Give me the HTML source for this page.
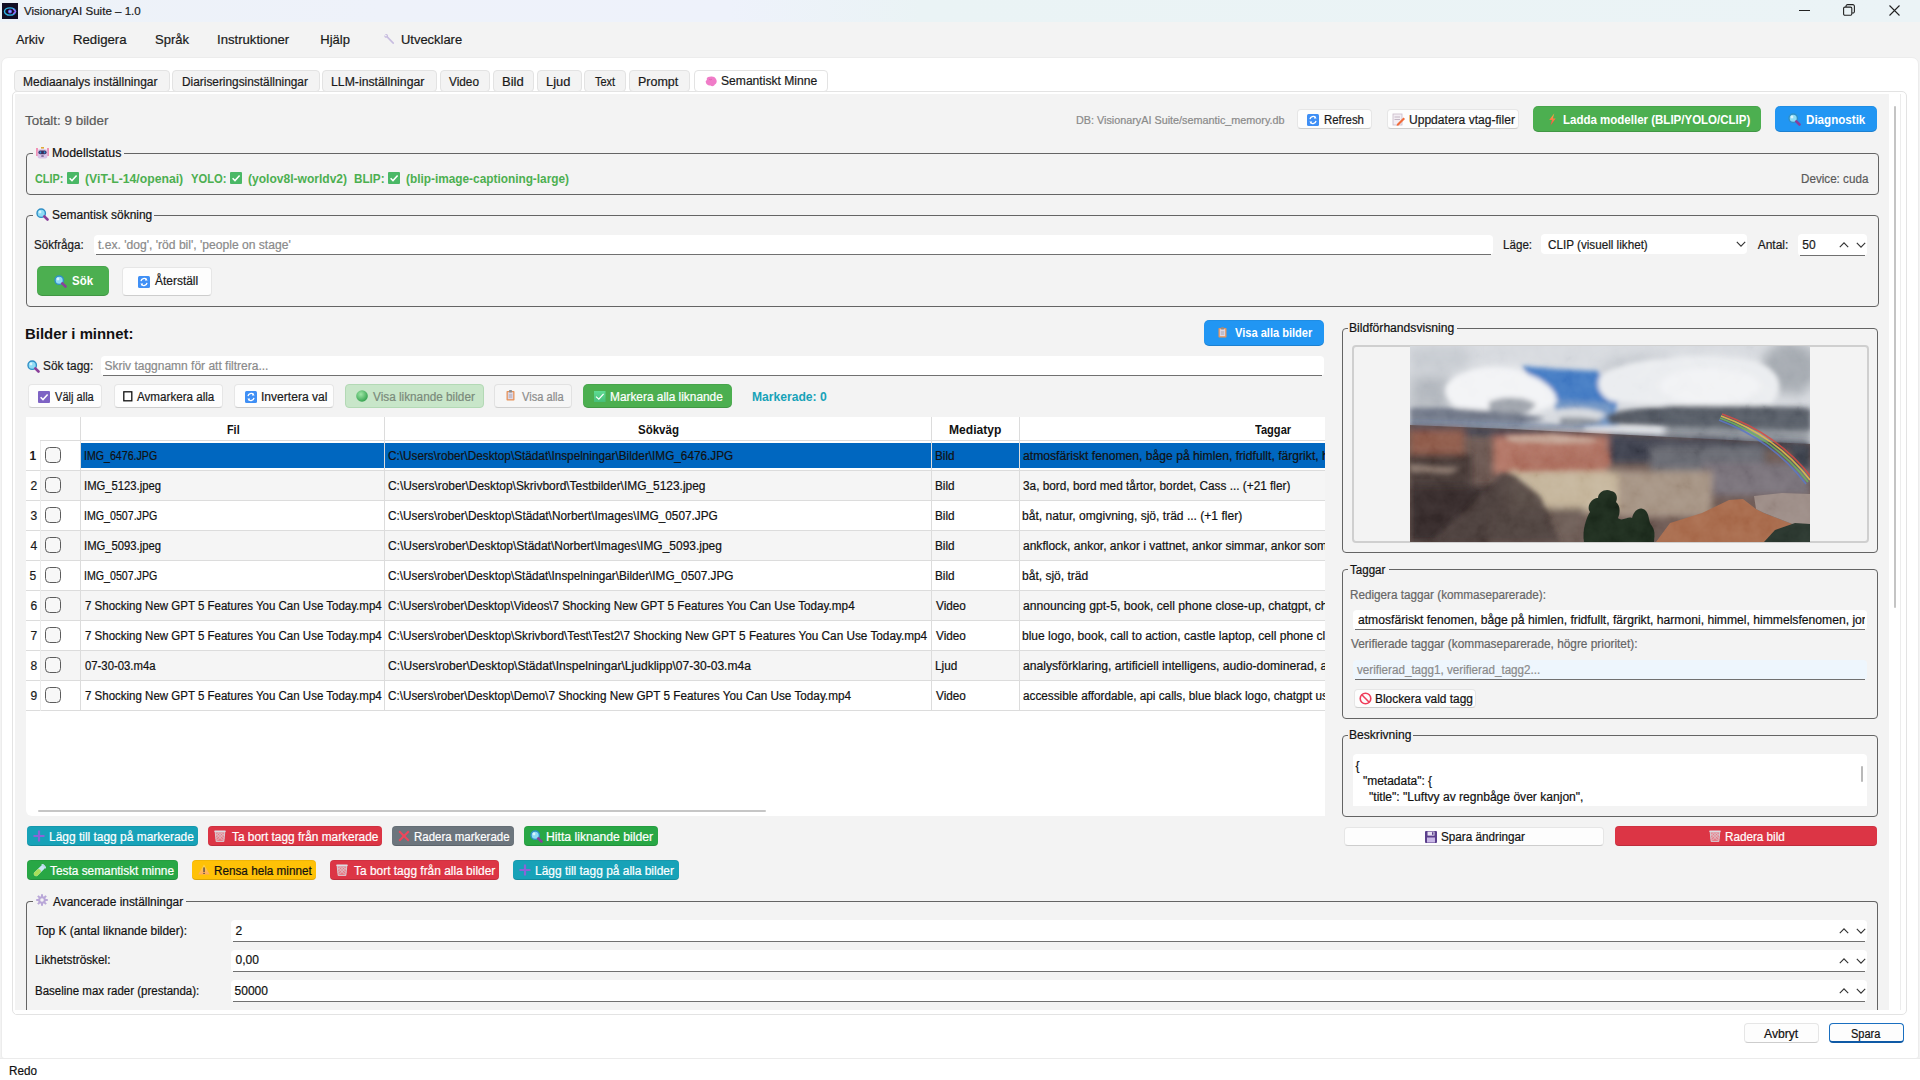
<!DOCTYPE html>
<html><head><meta charset="utf-8"><title>VisionaryAI Suite</title><style>*{margin:0;padding:0}html,body{width:1920px;height:1080px;overflow:hidden;background:#f3f3f3}
.b{position:absolute}
.t{position:absolute;white-space:nowrap;line-height:1;transform-origin:0 0;font-family:"Liberation Sans",sans-serif;-webkit-text-stroke-width:0.2px}
.t.bd{-webkit-text-stroke-width:0}
</style></head><body>
<div class="b" style="left:0px;top:0px;width:1920px;height:1080px;background:#f3f3f3"></div>
<div class="b" style="left:0px;top:0px;width:1920px;height:22px;background:linear-gradient(90deg,#edf2f8 0%,#eef2fa 20%,#eef2fb 38%,#eaf3f5 48%,#ebf3f6 100%)"></div>
<svg class="b" style="left:2px;top:3px" width="16" height="16" viewBox="0 0 16 16"><rect width="16" height="16" fill="#120d24"/><ellipse cx="8" cy="8.5" rx="5.5" ry="3.6" fill="none" stroke="#2fb3e6" stroke-width="1.4"/><circle cx="8" cy="8.5" r="2" fill="#7a4cf0"/><circle cx="8" cy="8.5" r="0.9" fill="#5de0ff"/><path d="M11 6 L13.6 8.4 L11 11" stroke="#a05cf5" stroke-width="1.2" fill="none"/></svg>
<div class="t" style="left:24.20px;top:6.26px;font-size:11.5px;color:#1b1b1b;transform:scaleX(1.0052);">VisionaryAI Suite – 1.0</div>
<div class="b" style="left:1799px;top:10px;width:11px;height:1px;background:#222"></div>
<svg class="b" style="left:1843px;top:4px" width="12" height="12" viewBox="0 0 12 12"><rect x="0.6" y="3.1" width="8.2" height="8.2" rx="1.2" fill="none" stroke="#222" stroke-width="1.1"/><path d="M3 3 V2.2 A1.6 1.6 0 0 1 4.6 0.6 H9.8 A1.6 1.6 0 0 1 11.4 2.2 V7.4 A1.6 1.6 0 0 1 9.8 9 H9" fill="none" stroke="#222" stroke-width="1.1"/></svg>
<svg class="b" style="left:1889px;top:5px" width="11" height="11" viewBox="0 0 11 11"><path d="M0.5 0.5 L10.5 10.5 M10.5 0.5 L0.5 10.5" stroke="#222" stroke-width="1.1"/></svg>
<div class="t" style="left:15.80px;top:32.99px;font-size:13px;color:#1a1a1a;transform:scaleX(0.9793);">Arkiv</div>
<div class="t" style="left:73.18px;top:32.99px;font-size:13px;color:#1a1a1a;transform:scaleX(1.0154);">Redigera</div>
<div class="t" style="left:155.25px;top:32.99px;font-size:13px;color:#1a1a1a;transform:scaleX(1.0015);">Språk</div>
<div class="t" style="left:216.99px;top:32.99px;font-size:13px;color:#1a1a1a;transform:scaleX(1.0099);">Instruktioner</div>
<div class="t" style="left:320.30px;top:32.99px;font-size:13px;color:#1a1a1a;transform:scaleX(1.0000);">Hjälp</div>
<div class="t" style="left:401.00px;top:32.99px;font-size:13px;color:#1a1a1a;transform:scaleX(0.9950);">Utvecklare</div>
<svg class="b" style="left:383px;top:33px" width="12" height="13" viewBox="0 0 12 13"><path d="M2 1.5 C3.5 0.5 5.5 1.5 5 3.5 L10.8 9.6 C11.6 10.4 10.6 11.6 9.7 10.8 L3.8 4.8 C2 5.2 0.8 3.6 1.4 2.2 L3 3.6 L4 2.6Z" fill="#c8bde0"/></svg>
<div class="b" style="left:1px;top:57px;width:1918px;height:1002px;background:#fff;border:1px solid #ececec;border-radius:7px 7px 3px 3px;box-sizing:border-box"></div>
<div class="b" style="left:12px;top:91px;width:1895px;height:924px;background:#fff;border:1px solid #e3e3e3;border-radius:5px;box-sizing:border-box"></div>
<div class="b" style="left:14px;top:70px;width:156px;height:22px;background:#f3f3f3;border:1px solid #e3e3e3;border-radius:4px;box-sizing:border-box"></div>
<div class="t" style="left:23.25px;top:75.84px;font-size:12px;color:#1a1a1a;transform:scaleX(0.9981);">Mediaanalys inställningar</div>
<div class="b" style="left:172px;top:70px;width:148px;height:22px;background:#f3f3f3;border:1px solid #e3e3e3;border-radius:4px;box-sizing:border-box"></div>
<div class="t" style="left:181.51px;top:75.84px;font-size:12px;color:#1a1a1a;transform:scaleX(0.9882);">Diariseringsinställningar</div>
<div class="b" style="left:322px;top:70px;width:115px;height:22px;background:#f3f3f3;border:1px solid #e3e3e3;border-radius:4px;box-sizing:border-box"></div>
<div class="t" style="left:330.98px;top:75.84px;font-size:12px;color:#1a1a1a;transform:scaleX(1.0220);">LLM-inställningar</div>
<div class="b" style="left:440px;top:70px;width:50px;height:22px;background:#f3f3f3;border:1px solid #e3e3e3;border-radius:4px;box-sizing:border-box"></div>
<div class="t" style="left:449.25px;top:75.84px;font-size:12px;color:#1a1a1a;transform:scaleX(0.9833);">Video</div>
<div class="b" style="left:493px;top:70px;width:41px;height:22px;background:#f3f3f3;border:1px solid #e3e3e3;border-radius:4px;box-sizing:border-box"></div>
<div class="t" style="left:501.92px;top:75.84px;font-size:12px;color:#1a1a1a;transform:scaleX(1.0833);">Bild</div>
<div class="b" style="left:537px;top:70px;width:45px;height:22px;background:#f3f3f3;border:1px solid #e3e3e3;border-radius:4px;box-sizing:border-box"></div>
<div class="t" style="left:545.93px;top:75.84px;font-size:12px;color:#1a1a1a;transform:scaleX(1.0714);">Ljud</div>
<div class="b" style="left:584px;top:70px;width:42px;height:22px;background:#f3f3f3;border:1px solid #e3e3e3;border-radius:4px;box-sizing:border-box"></div>
<div class="t" style="left:594.50px;top:75.84px;font-size:12px;color:#1a1a1a;transform:scaleX(0.9091);">Text</div>
<div class="b" style="left:629px;top:70px;width:61px;height:22px;background:#f3f3f3;border:1px solid #e3e3e3;border-radius:4px;box-sizing:border-box"></div>
<div class="t" style="left:638.21px;top:75.84px;font-size:12px;color:#1a1a1a;transform:scaleX(1.0395);">Prompt</div>
<div class="b" style="left:694px;top:70px;width:134px;height:22px;background:#fff;border:1px solid #e3e3e3;border-radius:4px;box-sizing:border-box"></div>
<svg class="b" style="left:705px;top:75.5px" width="12" height="11" viewBox="0 0 12 11"><path d="M2 4 C1 2 3 0.2 5 0.8 C7 0 10 0.6 11 3 C12.4 5 11.6 8 9.8 8.6 C9 10.4 6.6 10.6 5.6 9.4 C3.6 10 0.8 8.6 1 6.4 C0.2 5.6 1 4.4 2 4Z" fill="#f07cc8"/><path d="M4 3 C5 4 6 4 7 3" stroke="#d9559f" stroke-width="0.6" fill="none"/></svg>
<div class="t" style="left:721.29px;top:74.84px;font-size:12px;color:#1a1a1a;transform:scaleX(1.0085);">Semantiskt Minne</div>
<div class="b" style="left:15px;top:94px;width:1874px;height:916px;background:#f3f3f3"></div>
<div class="b" style="left:1900px;top:94px;width:1px;height:916px;background:#ececec"></div>
<div class="b" style="left:1894px;top:106px;width:2px;height:502px;background:#c4c4c4;border-radius:1px"></div>
<div class="t" style="left:25.25px;top:113.71px;font-size:13.33px;color:#5a5a5a;transform:scaleX(1.0060);">Totalt: 9 bilder</div>
<div class="t" style="left:1075.99px;top:114.94px;font-size:10.7px;color:#8a8a8a;transform:scaleX(1.0110);">DB: VisionaryAI Suite/semantic_memory.db</div>
<div class="b" style="left:1297px;top:109px;width:75px;height:20px;background:#fdfdfd;border:1px solid #e6e6e6;border-bottom-color:#cdcdcd;border-radius:4px;box-sizing:border-box"></div>
<svg class="b" style="left:1307px;top:113.5px" width="12" height="12" viewBox="0 0 12 12"><rect x="0" y="0" width="12" height="12" rx="1.5" fill="#3f8ff5"/><path d="M3 5.2 A3.2 3.2 0 0 1 8.6 3.6 M9 6.8 A3.2 3.2 0 0 1 3.4 8.4" fill="none" stroke="#fff" stroke-width="1.3"/><path d="M8 2 L9.6 4.4 L6.8 4.6Z M4 10 L2.4 7.6 L5.2 7.4Z" fill="#fff"/></svg>
<div class="t" style="left:1323.55px;top:113.84px;font-size:12px;color:#1a1a1a;transform:scaleX(0.9500);">Refresh</div>
<div class="b" style="left:1387px;top:109px;width:132px;height:20px;background:#fdfdfd;border:1px solid #e6e6e6;border-bottom-color:#cdcdcd;border-radius:4px;box-sizing:border-box"></div>
<svg class="b" style="left:1392px;top:113px" width="13" height="13" viewBox="0 0 13 13"><rect x="1" y="1" width="9" height="11" fill="#f3eef4" stroke="#c9b9c9" stroke-width="0.8"/><line x1="2.5" y1="4" x2="8" y2="4" stroke="#b7a7b7" stroke-width="0.8"/><line x1="2.5" y1="6.5" x2="8" y2="6.5" stroke="#b7a7b7" stroke-width="0.8"/><path d="M5 11 L11.5 4.5 L13 6 L6.5 12.5 L4.6 12.8Z" fill="#f26b3a"/></svg>
<div class="t" style="left:1408.50px;top:113.84px;font-size:12px;color:#1a1a1a;transform:scaleX(1.0048);">Uppdatera vtag-filer</div>
<div class="b" style="left:1533px;top:106px;width:228px;height:26px;background:#4caf50;border-radius:5px;box-shadow:inset 0 -1px rgba(0,0,0,0.14),inset 0 1px rgba(0,0,0,0.06)"></div>
<svg class="b" style="left:1547.5px;top:113px" width="9" height="13" viewBox="0 0 9 13"><defs><linearGradient id="gbolt" x1="0" y1="0" x2="0" y2="1"><stop offset="0" stop-color="#ffb040"/><stop offset="1" stop-color="#ff4048"/></linearGradient></defs><path d="M6.2 0.6 L1.2 7 L4 7 L2.6 12.4 L7.6 5.4 L4.9 5.4 Z" fill="url(#gbolt)"/></svg>
<div class="t bd" style="left:1563.04px;top:113.84px;font-size:12px;font-weight:700;color:#fff;transform:scaleX(0.9588);">Ladda modeller (BLIP/YOLO/CLIP)</div>
<div class="b" style="left:1775px;top:106px;width:102px;height:26px;background:#2196f3;border-radius:5px;box-shadow:inset 0 -1px rgba(0,0,0,0.14),inset 0 1px rgba(0,0,0,0.06)"></div>
<svg class="b" style="left:1787.5px;top:112.5px" width="13" height="13" viewBox="0 0 13 13"><circle cx="5.2" cy="5.2" r="4.2" fill="#8fdcf5" stroke="#2f8fc6" stroke-width="1.4"/><circle cx="4" cy="4" r="1.4" fill="#d8f4fd"/><line x1="8.3" y1="8.3" x2="11.5" y2="11.5" stroke="#8a3f9a" stroke-width="2.6" stroke-linecap="round"/></svg>
<div class="t bd" style="left:1805.53px;top:113.84px;font-size:12px;font-weight:700;color:#fff;transform:scaleX(0.9672);">Diagnostik</div>
<div class="b" style="left:26px;top:153px;width:1853px;height:42px;border:1px solid #646464;border-radius:4px;box-sizing:border-box"></div>
<div class="b" style="left:33px;top:151px;width:91px;height:5px;background:#f3f3f3"></div>
<svg class="b" style="left:36px;top:147px" width="13" height="12" viewBox="0 0 13 12"><rect x="5" y="0" width="3" height="1.6" fill="#e0a93a"/><rect x="0.3" y="1" width="1.4" height="8" fill="#f0679a"/><rect x="11.3" y="1" width="1.4" height="8" fill="#f0679a"/><rect x="1.6" y="2.2" width="9.8" height="9.4" rx="2" fill="#d9c4e8"/><rect x="2.4" y="3.6" width="8.2" height="3.6" rx="1.8" fill="#3b2a5a"/><rect x="3.6" y="4.4" width="1.6" height="2" fill="#2e8fd6"/><rect x="7.8" y="4.4" width="1.6" height="2" fill="#2e8fd6"/><rect x="5.2" y="8.6" width="2.6" height="1" rx="0.5" fill="#3b2a5a"/></svg>
<div class="t" style="left:51.97px;top:146.84px;font-size:12px;color:#111;transform:scaleX(1.0303);">Modellstatus</div>
<div class="t bd" style="left:35.00px;top:172.84px;font-size:12px;font-weight:700;color:#4caf50;transform:scaleX(0.9083);">CLIP:</div>
<svg class="b" style="left:67px;top:172px" width="12" height="12" viewBox="0 0 12 12"><rect x="0" y="0" width="12" height="12" rx="1" fill="#4ab866"/><path d="M2.6 6.2 L5 8.6 L9.6 3.6" fill="none" stroke="#fff" stroke-width="1.5"/></svg>
<div class="t bd" style="left:85.00px;top:172.84px;font-size:12px;font-weight:700;color:#4caf50;transform:scaleX(1.0177);">(ViT-L-14/openai)</div>
<div class="t bd" style="left:190.70px;top:172.84px;font-size:12px;font-weight:700;color:#4caf50;transform:scaleX(0.9351);">YOLO:</div>
<svg class="b" style="left:230px;top:172px" width="12" height="12" viewBox="0 0 12 12"><rect x="0" y="0" width="12" height="12" rx="1" fill="#4ab866"/><path d="M2.6 6.2 L5 8.6 L9.6 3.6" fill="none" stroke="#fff" stroke-width="1.5"/></svg>
<div class="t bd" style="left:248.30px;top:172.84px;font-size:12px;font-weight:700;color:#4caf50;transform:scaleX(1.0041);">(yolov8l-worldv2)</div>
<div class="t bd" style="left:354.02px;top:172.84px;font-size:12px;font-weight:700;color:#4caf50;transform:scaleX(0.9759);">BLIP:</div>
<svg class="b" style="left:388px;top:172px" width="12" height="12" viewBox="0 0 12 12"><rect x="0" y="0" width="12" height="12" rx="1" fill="#4ab866"/><path d="M2.6 6.2 L5 8.6 L9.6 3.6" fill="none" stroke="#fff" stroke-width="1.5"/></svg>
<div class="t bd" style="left:406.00px;top:172.84px;font-size:12px;font-weight:700;color:#4caf50;transform:scaleX(0.9861);">(blip-image-captioning-large)</div>
<div class="t" style="left:1801.03px;top:172.84px;font-size:12px;color:#5a5a5a;transform:scaleX(0.9710);">Device: cuda</div>
<div class="b" style="left:26px;top:215px;width:1853px;height:92px;border:1px solid #646464;border-radius:4px;box-sizing:border-box"></div>
<div class="b" style="left:33px;top:213px;width:121px;height:5px;background:#f3f3f3"></div>
<svg class="b" style="left:36px;top:208px" width="13" height="13" viewBox="0 0 13 13"><circle cx="5.2" cy="5.2" r="4.2" fill="#8fdcf5" stroke="#2f8fc6" stroke-width="1.4"/><circle cx="4" cy="4" r="1.4" fill="#d8f4fd"/><line x1="8.3" y1="8.3" x2="11.5" y2="11.5" stroke="#8a3f9a" stroke-width="2.6" stroke-linecap="round"/></svg>
<div class="t" style="left:52.01px;top:208.84px;font-size:12px;color:#111;transform:scaleX(0.9949);">Semantisk sökning</div>
<div class="t" style="left:34.03px;top:238.84px;font-size:12px;color:#1a1a1a;transform:scaleX(0.9660);">Sökfråga:</div>
<div class="b" style="left:94px;top:235px;width:1399px;height:20px;background:#fff;border-radius:4px"></div>
<div class="b" style="left:96px;top:254px;width:1395px;height:1px;background:#707070"></div>
<div class="t" style="left:97.80px;top:238.84px;font-size:12px;color:#8a8a8a;transform:scaleX(1.0079);">t.ex. 'dog', 'röd bil', 'people on stage'</div>
<div class="t" style="left:1502.53px;top:238.84px;font-size:12px;color:#1a1a1a;transform:scaleX(0.9679);">Läge:</div>
<div class="b" style="left:1541px;top:234px;width:206px;height:20px;background:#fff;border-radius:4px"></div>
<div class="t" style="left:1548.40px;top:238.84px;font-size:12px;color:#1a1a1a;transform:scaleX(0.9735);">CLIP (visuell likhet)</div>
<svg class="b" style="left:1735.5px;top:241px" width="10" height="6" viewBox="0 0 10 6"><path d="M0.8 0.8 L5.0 5.2 L9.2 0.8" fill="none" stroke="#333" stroke-width="1.1"/></svg>
<div class="t" style="left:1757.70px;top:238.84px;font-size:12px;color:#1a1a1a;transform:scaleX(1.0000);">Antal:</div>
<div class="b" style="left:1798px;top:234px;width:69px;height:22px;background:#fff;border-radius:4px"></div>
<div class="b" style="left:1800px;top:255px;width:65px;height:1px;background:#707070"></div>
<div class="t" style="left:1802.30px;top:238.84px;font-size:12px;color:#1a1a1a;">50</div>
<svg class="b" style="left:1839.3px;top:241.5px" width="10" height="6" viewBox="0 0 10 6"><path d="M0.8 5.2 L5.0 0.8 L9.2 5.2" fill="none" stroke="#333" stroke-width="1.1"/></svg>
<svg class="b" style="left:1855.5px;top:242px" width="10" height="6" viewBox="0 0 10 6"><path d="M0.8 0.8 L5.0 5.2 L9.2 0.8" fill="none" stroke="#333" stroke-width="1.1"/></svg>
<div class="b" style="left:37px;top:266px;width:72px;height:30px;background:#4caf50;border-radius:5px;box-shadow:inset 0 -1px rgba(0,0,0,0.14),inset 0 1px rgba(0,0,0,0.06)"></div>
<svg class="b" style="left:54px;top:275px" width="13" height="13" viewBox="0 0 13 13"><circle cx="5.2" cy="5.2" r="4.2" fill="#8fdcf5" stroke="#2f8fc6" stroke-width="1.4"/><circle cx="4" cy="4" r="1.4" fill="#d8f4fd"/><line x1="8.3" y1="8.3" x2="11.5" y2="11.5" stroke="#8a3f9a" stroke-width="2.6" stroke-linecap="round"/></svg>
<div class="t bd" style="left:72.00px;top:275.34px;font-size:12px;font-weight:700;color:#fff;transform:scaleX(0.9545);">Sök</div>
<div class="b" style="left:122px;top:267px;width:90px;height:29px;background:#fdfdfd;border:1px solid #e6e6e6;border-bottom-color:#cdcdcd;border-radius:4px;box-sizing:border-box"></div>
<svg class="b" style="left:138px;top:276px" width="12" height="12" viewBox="0 0 12 12"><rect x="0" y="0" width="12" height="12" rx="1.5" fill="#3f8ff5"/><path d="M3 5.2 A3.2 3.2 0 0 1 8.6 3.6 M9 6.8 A3.2 3.2 0 0 1 3.4 8.4" fill="none" stroke="#fff" stroke-width="1.3"/><path d="M8 2 L9.6 4.4 L6.8 4.6Z M4 10 L2.4 7.6 L5.2 7.4Z" fill="#fff"/></svg>
<div class="t" style="left:155.00px;top:275.34px;font-size:12px;color:#1a1a1a;transform:scaleX(0.9953);">Återställ</div>
<div class="t bd" style="left:24.76px;top:326.30px;font-size:15px;font-weight:700;color:#111;transform:scaleX(0.9930);">Bilder i minnet:</div>
<div class="b" style="left:1204px;top:320px;width:120px;height:26px;background:#2196f3;border-radius:5px;box-shadow:inset 0 -1px rgba(0,0,0,0.14),inset 0 1px rgba(0,0,0,0.06)"></div>
<svg class="b" style="left:1218px;top:327px" width="9" height="11" viewBox="0 0 9 11"><rect x="0.5" y="1" width="8" height="9.5" rx="0.8" fill="#e8935a"/><rect x="1.8" y="2.2" width="5.4" height="7" fill="#ddd8e6"/><rect x="3" y="0" width="3" height="2.4" rx="0.6" fill="#8d8d8d"/><line x1="2.8" y1="5" x2="6.2" y2="5" stroke="#9b97a6" stroke-width="0.8"/><line x1="2.8" y1="7" x2="6.2" y2="7" stroke="#9b97a6" stroke-width="0.8"/></svg>
<div class="t bd" style="left:1235.40px;top:327.34px;font-size:12px;font-weight:700;color:#fff;transform:scaleX(0.9226);">Visa alla bilder</div>
<svg class="b" style="left:27px;top:360px" width="13" height="13" viewBox="0 0 13 13"><circle cx="5.2" cy="5.2" r="4.2" fill="#8fdcf5" stroke="#2f8fc6" stroke-width="1.4"/><circle cx="4" cy="4" r="1.4" fill="#d8f4fd"/><line x1="8.3" y1="8.3" x2="11.5" y2="11.5" stroke="#8a3f9a" stroke-width="2.6" stroke-linecap="round"/></svg>
<div class="t" style="left:43.01px;top:359.84px;font-size:12px;color:#1a1a1a;transform:scaleX(0.9898);">Sök tagg:</div>
<div class="b" style="left:101px;top:356px;width:1223px;height:20px;background:#fff;border-radius:4px"></div>
<div class="b" style="left:103px;top:375px;width:1219px;height:1px;background:#707070"></div>
<div class="t" style="left:104.40px;top:359.84px;font-size:12px;color:#8a8a8a;">Skriv taggnamn för att filtrera...</div>
<div class="b" style="left:28px;top:384px;width:74px;height:24px;background:#fdfdfd;border:1px solid #e6e6e6;border-bottom-color:#cdcdcd;border-radius:4px;box-sizing:border-box"></div>
<svg class="b" style="left:38px;top:390.5px" width="12" height="12" viewBox="0 0 12 12"><rect x="0" y="0" width="12" height="12" rx="1" fill="#7e63c4"/><path d="M2.6 6.2 L5 8.6 L9.6 3.6" fill="none" stroke="#fff" stroke-width="1.5"/></svg>
<div class="t" style="left:55.00px;top:390.84px;font-size:12px;color:#1a1a1a;transform:scaleX(0.9226);">Välj alla</div>
<div class="b" style="left:114px;top:384px;width:109px;height:24px;background:#fdfdfd;border:1px solid #e6e6e6;border-bottom-color:#cdcdcd;border-radius:4px;box-sizing:border-box"></div>
<svg class="b" style="left:123px;top:391px" width="10" height="11" viewBox="0 0 10 11"><rect x="0.8" y="0.8" width="8" height="9" fill="none" stroke="#111" stroke-width="1.3"/></svg>
<div class="t" style="left:137.25px;top:390.84px;font-size:12px;color:#1a1a1a;transform:scaleX(0.9688);">Avmarkera alla</div>
<div class="b" style="left:234px;top:384px;width:100px;height:24px;background:#fdfdfd;border:1px solid #e6e6e6;border-bottom-color:#cdcdcd;border-radius:4px;box-sizing:border-box"></div>
<svg class="b" style="left:245px;top:390.5px" width="12" height="12" viewBox="0 0 12 12"><rect x="0" y="0" width="12" height="12" rx="1.5" fill="#3f8ff5"/><path d="M3 5.2 A3.2 3.2 0 0 1 8.6 3.6 M9 6.8 A3.2 3.2 0 0 1 3.4 8.4" fill="none" stroke="#fff" stroke-width="1.3"/><path d="M8 2 L9.6 4.4 L6.8 4.6Z M4 10 L2.4 7.6 L5.2 7.4Z" fill="#fff"/></svg>
<div class="t" style="left:260.59px;top:390.84px;font-size:12px;color:#1a1a1a;transform:scaleX(1.0062);">Invertera val</div>
<div class="b" style="left:345px;top:384px;width:139px;height:24px;background:#c8e6c9;border:1px solid #b3d9b5;border-radius:4px;box-sizing:border-box"></div>
<svg class="b" style="left:356.3px;top:390.3px" width="12" height="12" viewBox="0 0 12 12"><defs><radialGradient id="gb" cx="0.4" cy="0.35" r="0.7"><stop offset="0" stop-color="#9ee6a6"/><stop offset="1" stop-color="#2f9f4a"/></radialGradient></defs><circle cx="6" cy="6" r="5.8" fill="url(#gb)"/></svg>
<div class="t" style="left:373.00px;top:390.84px;font-size:12px;color:#7a8a7a;transform:scaleX(0.9808);">Visa liknande bilder</div>
<div class="b" style="left:494px;top:384px;width:78px;height:24px;background:#f6f6f6;border:1px solid #e2e2e2;border-bottom-color:#cfcfcf;border-radius:4px;box-sizing:border-box"></div>
<svg class="b" style="left:505.6px;top:390px" width="9" height="11" viewBox="0 0 9 11"><rect x="0.5" y="1" width="8" height="9.5" rx="0.8" fill="#e8935a"/><rect x="1.8" y="2.2" width="5.4" height="7" fill="#ddd8e6"/><rect x="3" y="0" width="3" height="2.4" rx="0.6" fill="#8d8d8d"/><line x1="2.8" y1="5" x2="6.2" y2="5" stroke="#9b97a6" stroke-width="0.8"/><line x1="2.8" y1="7" x2="6.2" y2="7" stroke="#9b97a6" stroke-width="0.8"/></svg>
<div class="t" style="left:521.90px;top:390.84px;font-size:12px;color:#8c8c8c;transform:scaleX(0.9244);">Visa alla</div>
<div class="b" style="left:583px;top:384px;width:149px;height:24px;background:#4caf50;border-radius:5px;box-shadow:inset 0 -1px rgba(0,0,0,0.14),inset 0 1px rgba(0,0,0,0.06)"></div>
<svg class="b" style="left:594.2px;top:391px" width="12" height="12" viewBox="0 0 12 12"><defs><linearGradient id="gcl" x1="0" y1="0" x2="0" y2="1"><stop offset="0" stop-color="#5fdc94"/><stop offset="1" stop-color="#47bf7a"/></linearGradient></defs><rect x="0" y="0" width="11.5" height="11" fill="url(#gcl)"/><path d="M2 5.6 L4.8 8.2 L9.6 2.8" fill="none" stroke="#fff" stroke-width="1.2"/></svg>
<div class="t" style="left:610.26px;top:390.84px;font-size:12px;color:#fff;transform:scaleX(0.9889);">Markera alla liknande</div>
<div class="t bd" style="left:751.99px;top:390.84px;font-size:12px;font-weight:700;color:#17a2b8;transform:scaleX(1.0096);">Markerade: 0</div>
<div class="b" style="left:26px;top:417px;width:1299px;height:399px;background:#fff;border-radius:0 0 0 6px"></div>
<div class="b" style="left:81px;top:443px;width:303px;height:25px;background:#0067c0"></div>
<div class="b" style="left:385px;top:443px;width:546px;height:25px;background:#0067c0"></div>
<div class="b" style="left:932px;top:443px;width:87px;height:25px;background:#0067c0"></div>
<div class="b" style="left:1020px;top:443px;width:305px;height:25px;background:#0067c0"></div>
<div class="t bd" style="left:29.50px;top:449.84px;font-size:12px;font-weight:700;color:#1a1a1a;">1</div>
<div class="b" style="left:45px;top:447px;width:16px;height:16px;border:1.2px solid #5c5c5c;border-radius:4.5px;box-sizing:border-box;background:#f7f7f7"></div>
<div class="t" style="left:83.72px;top:449.84px;font-size:12px;color:#111;transform:scaleX(0.8846);">IMG_6476.JPG</div>
<div class="t" style="left:388.20px;top:449.84px;font-size:12px;color:#111;transform:scaleX(0.9801);">C:\Users\rober\Desktop\Städat\Inspelningar\Bilder\IMG_6476.JPG</div>
<div class="t" style="left:934.50px;top:449.84px;font-size:12px;color:#111;transform:scaleX(0.98);">Bild</div>
<div class="b" style="left:1020px;top:441px;width:305px;height:29px;overflow:hidden">
<div class="t" style="left:3.30px;top:8.84px;font-size:12px;color:#111;transform:scaleX(1.0120);">atmosfäriskt fenomen, båge på himlen, fridfullt, färgrikt, harmoni, himmel</div>
</div>
<div class="b" style="left:40px;top:471px;width:1285px;height:29px;background:#f5f5f5"></div>
<div class="t" style="left:30.50px;top:479.84px;font-size:12px;color:#1a1a1a;">2</div>
<div class="b" style="left:45px;top:477px;width:16px;height:16px;border:1.2px solid #5c5c5c;border-radius:4.5px;box-sizing:border-box;background:#f7f7f7"></div>
<div class="t" style="left:83.66px;top:479.84px;font-size:12px;color:#111;transform:scaleX(0.9383);">IMG_5123.jpeg</div>
<div class="t" style="left:388.20px;top:479.84px;font-size:12px;color:#111;transform:scaleX(0.9937);">C:\Users\rober\Desktop\Skrivbord\Testbilder\IMG_5123.jpeg</div>
<div class="t" style="left:934.50px;top:479.84px;font-size:12px;color:#111;transform:scaleX(0.98);">Bild</div>
<div class="b" style="left:1020px;top:471px;width:305px;height:29px;overflow:hidden">
<div class="t" style="left:3.30px;top:8.84px;font-size:12px;color:#111;transform:scaleX(0.9838);">3a, bord, bord med tårtor, bordet, Cass ... (+21 fler)</div>
</div>
<div class="t" style="left:30.50px;top:509.84px;font-size:12px;color:#1a1a1a;">3</div>
<div class="b" style="left:45px;top:507px;width:16px;height:16px;border:1.2px solid #5c5c5c;border-radius:4.5px;box-sizing:border-box;background:#f7f7f7"></div>
<div class="t" style="left:83.71px;top:509.84px;font-size:12px;color:#111;transform:scaleX(0.8864);">IMG_0507.JPG</div>
<div class="t" style="left:388.20px;top:509.84px;font-size:12px;color:#111;transform:scaleX(0.9830);">C:\Users\rober\Desktop\Städat\Norbert\Images\IMG_0507.JPG</div>
<div class="t" style="left:934.50px;top:509.84px;font-size:12px;color:#111;transform:scaleX(0.98);">Bild</div>
<div class="b" style="left:1020px;top:501px;width:305px;height:29px;overflow:hidden">
<div class="t" style="left:2.29px;top:8.84px;font-size:12px;color:#111;transform:scaleX(1.0050);">båt, natur, omgivning, sjö, träd ... (+1 fler)</div>
</div>
<div class="b" style="left:40px;top:531px;width:1285px;height:29px;background:#f5f5f5"></div>
<div class="t" style="left:30.50px;top:539.84px;font-size:12px;color:#1a1a1a;">4</div>
<div class="b" style="left:45px;top:537px;width:16px;height:16px;border:1.2px solid #5c5c5c;border-radius:4.5px;box-sizing:border-box;background:#f7f7f7"></div>
<div class="t" style="left:83.66px;top:539.84px;font-size:12px;color:#111;transform:scaleX(0.9383);">IMG_5093.jpeg</div>
<div class="t" style="left:388.20px;top:539.84px;font-size:12px;color:#111;transform:scaleX(0.9972);">C:\Users\rober\Desktop\Städat\Norbert\Images\IMG_5093.jpeg</div>
<div class="t" style="left:934.50px;top:539.84px;font-size:12px;color:#111;transform:scaleX(0.98);">Bild</div>
<div class="b" style="left:1020px;top:531px;width:305px;height:29px;overflow:hidden">
<div class="t" style="left:3.30px;top:8.84px;font-size:12px;color:#111;transform:scaleX(1.0016);">ankflock, ankor, ankor i vattnet, ankor simmar, ankor som simmar</div>
</div>
<div class="t" style="left:29.50px;top:569.84px;font-size:12px;color:#1a1a1a;">5</div>
<div class="b" style="left:45px;top:567px;width:16px;height:16px;border:1.2px solid #5c5c5c;border-radius:4.5px;box-sizing:border-box;background:#f7f7f7"></div>
<div class="t" style="left:83.71px;top:569.84px;font-size:12px;color:#111;transform:scaleX(0.8864);">IMG_0507.JPG</div>
<div class="t" style="left:388.20px;top:569.84px;font-size:12px;color:#111;transform:scaleX(0.9810);">C:\Users\rober\Desktop\Städat\Inspelningar\Bilder\IMG_0507.JPG</div>
<div class="t" style="left:934.50px;top:569.84px;font-size:12px;color:#111;transform:scaleX(0.98);">Bild</div>
<div class="b" style="left:1020px;top:561px;width:305px;height:29px;overflow:hidden">
<div class="t" style="left:2.30px;top:8.84px;font-size:12px;color:#111;transform:scaleX(1.0031);">båt, sjö, träd</div>
</div>
<div class="b" style="left:40px;top:591px;width:1285px;height:29px;background:#f5f5f5"></div>
<div class="t" style="left:30.50px;top:599.84px;font-size:12px;color:#1a1a1a;">6</div>
<div class="b" style="left:45px;top:597px;width:16px;height:16px;border:1.2px solid #5c5c5c;border-radius:4.5px;box-sizing:border-box;background:#f7f7f7"></div>
<div class="t" style="left:84.60px;top:599.84px;font-size:12px;color:#111;transform:scaleX(0.9586);">7 Shocking New GPT 5 Features You Can Use Today.mp4</div>
<div class="t" style="left:388.20px;top:599.84px;font-size:12px;color:#111;transform:scaleX(0.9762);">C:\Users\rober\Desktop\Videos\7 Shocking New GPT 5 Features You Can Use Today.mp4</div>
<div class="t" style="left:935.50px;top:599.84px;font-size:12px;color:#111;transform:scaleX(0.98);">Video</div>
<div class="b" style="left:1020px;top:591px;width:305px;height:29px;overflow:hidden">
<div class="t" style="left:3.30px;top:8.84px;font-size:12px;color:#111;transform:scaleX(1.0123);">announcing gpt-5, book, cell phone close-up, chatgpt, chatgpt logo</div>
</div>
<div class="t" style="left:30.50px;top:629.84px;font-size:12px;color:#1a1a1a;">7</div>
<div class="b" style="left:45px;top:627px;width:16px;height:16px;border:1.2px solid #5c5c5c;border-radius:4.5px;box-sizing:border-box;background:#f7f7f7"></div>
<div class="t" style="left:84.60px;top:629.84px;font-size:12px;color:#111;transform:scaleX(0.9586);">7 Shocking New GPT 5 Features You Can Use Today.mp4</div>
<div class="t" style="left:388.20px;top:629.84px;font-size:12px;color:#111;transform:scaleX(0.9810);">C:\Users\rober\Desktop\Skrivbord\Test\Test2\7 Shocking New GPT 5 Features You Can Use Today.mp4</div>
<div class="t" style="left:935.50px;top:629.84px;font-size:12px;color:#111;transform:scaleX(0.98);">Video</div>
<div class="b" style="left:1020px;top:621px;width:305px;height:29px;overflow:hidden">
<div class="t" style="left:2.30px;top:8.84px;font-size:12px;color:#111;transform:scaleX(1.0035);">blue logo, book, call to action, castle laptop, cell phone close-up</div>
</div>
<div class="b" style="left:40px;top:651px;width:1285px;height:29px;background:#f5f5f5"></div>
<div class="t" style="left:30.50px;top:659.84px;font-size:12px;color:#1a1a1a;">8</div>
<div class="b" style="left:45px;top:657px;width:16px;height:16px;border:1.2px solid #5c5c5c;border-radius:4.5px;box-sizing:border-box;background:#f7f7f7"></div>
<div class="t" style="left:84.60px;top:659.84px;font-size:12px;color:#111;transform:scaleX(0.9440);">07-30-03.m4a</div>
<div class="t" style="left:388.20px;top:659.84px;font-size:12px;color:#111;transform:scaleX(1.0058);">C:\Users\rober\Desktop\Städat\Inspelningar\Ljudklipp\07-30-03.m4a</div>
<div class="t" style="left:934.50px;top:659.84px;font-size:12px;color:#111;transform:scaleX(0.98);">Ljud</div>
<div class="b" style="left:1020px;top:651px;width:305px;height:29px;overflow:hidden">
<div class="t" style="left:3.30px;top:8.84px;font-size:12px;color:#111;transform:scaleX(1.0117);">analysförklaring, artificiell intelligens, audio-dominerad, analys</div>
</div>
<div class="t" style="left:30.50px;top:689.84px;font-size:12px;color:#1a1a1a;">9</div>
<div class="b" style="left:45px;top:687px;width:16px;height:16px;border:1.2px solid #5c5c5c;border-radius:4.5px;box-sizing:border-box;background:#f7f7f7"></div>
<div class="t" style="left:84.60px;top:689.84px;font-size:12px;color:#111;transform:scaleX(0.9586);">7 Shocking New GPT 5 Features You Can Use Today.mp4</div>
<div class="t" style="left:388.20px;top:689.84px;font-size:12px;color:#111;transform:scaleX(0.9776);">C:\Users\rober\Desktop\Demo\7 Shocking New GPT 5 Features You Can Use Today.mp4</div>
<div class="t" style="left:935.50px;top:689.84px;font-size:12px;color:#111;transform:scaleX(0.98);">Video</div>
<div class="b" style="left:1020px;top:681px;width:305px;height:29px;overflow:hidden">
<div class="t" style="left:3.30px;top:8.84px;font-size:12px;color:#111;transform:scaleX(0.9797);">accessible affordable, api calls, blue black logo, chatgpt using</div>
</div>
<div class="b" style="left:40px;top:440px;width:1285px;height:1px;background:#dcdcdc"></div>
<div class="b" style="left:26px;top:470px;width:1299px;height:1px;background:#dcdcdc"></div>
<div class="b" style="left:26px;top:500px;width:1299px;height:1px;background:#dcdcdc"></div>
<div class="b" style="left:26px;top:530px;width:1299px;height:1px;background:#dcdcdc"></div>
<div class="b" style="left:26px;top:560px;width:1299px;height:1px;background:#dcdcdc"></div>
<div class="b" style="left:26px;top:590px;width:1299px;height:1px;background:#dcdcdc"></div>
<div class="b" style="left:26px;top:620px;width:1299px;height:1px;background:#dcdcdc"></div>
<div class="b" style="left:26px;top:650px;width:1299px;height:1px;background:#dcdcdc"></div>
<div class="b" style="left:26px;top:680px;width:1299px;height:1px;background:#dcdcdc"></div>
<div class="b" style="left:26px;top:710px;width:1299px;height:1px;background:#dcdcdc"></div>
<div class="b" style="left:40px;top:441px;width:1px;height:270px;background:#ececec"></div>
<div class="b" style="left:80px;top:417px;width:1px;height:294px;background:#dcdcdc"></div>
<div class="b" style="left:384px;top:417px;width:1px;height:294px;background:#dcdcdc"></div>
<div class="b" style="left:931px;top:417px;width:1px;height:294px;background:#dcdcdc"></div>
<div class="b" style="left:1019px;top:417px;width:1px;height:294px;background:#dcdcdc"></div>
<div class="t bd" style="left:226.60px;top:423.84px;font-size:12px;font-weight:700;color:#111;transform:scaleX(0.9038);">Fil</div>
<div class="t bd" style="left:638.20px;top:423.84px;font-size:12px;font-weight:700;color:#111;transform:scaleX(0.9595);">Sökväg</div>
<div class="t bd" style="left:949.39px;top:423.84px;font-size:12px;font-weight:700;color:#111;transform:scaleX(1.0059);">Mediatyp</div>
<div class="t bd" style="left:1255.00px;top:423.84px;font-size:12px;font-weight:700;color:#111;transform:scaleX(0.9231);">Taggar</div>
<div class="b" style="left:38px;top:810px;width:728px;height:2px;background:#c6c6c6;border-radius:1px"></div>
<div class="b" style="left:27px;top:826px;width:171px;height:20px;background:#17a2b8;border-radius:4px;box-shadow:inset 0 -1px rgba(0,0,0,0.14),inset 0 1px rgba(0,0,0,0.06)"></div>
<svg class="b" style="left:32.5px;top:830.0px" width="12" height="12" viewBox="0 0 12 12"><path d="M6 0.5 V11.5 M0.5 6 H11.5" stroke="#8b63d8" stroke-width="2.2"/></svg>
<div class="t" style="left:49.40px;top:830.84px;font-size:12px;color:#fff;transform:scaleX(0.9958);">Lägg till tagg på markerade</div>
<div class="b" style="left:208px;top:826px;width:174px;height:20px;background:#dc3545;border-radius:4px;box-shadow:inset 0 -1px rgba(0,0,0,0.14),inset 0 1px rgba(0,0,0,0.06)"></div>
<svg class="b" style="left:214px;top:830.0px" width="12" height="12" viewBox="0 0 12 12"><rect x="0.3" y="0.4" width="11.4" height="1.6" rx="0.5" fill="#dfe2e8"/><path d="M1.2 2 L10.8 2 L9.8 11.6 L2.2 11.6Z" fill="#ffffff" fill-opacity="0.35" stroke="#d5d8de" stroke-width="0.9"/><path d="M2 3.5 L9 10.5 M4.5 3 L10 8.5 M7.5 3 L10.4 5.9 M10 3.5 L3 10.5 M7.5 3 L2 8.5 M4.5 3 L1.6 5.9" stroke="#d9dce2" stroke-width="0.7"/></svg>
<div class="t" style="left:231.70px;top:830.84px;font-size:12px;color:#fff;transform:scaleX(0.9885);">Ta bort tagg från markerade</div>
<div class="b" style="left:392px;top:826px;width:122px;height:20px;background:#6c757d;border-radius:4px;box-shadow:inset 0 -1px rgba(0,0,0,0.14),inset 0 1px rgba(0,0,0,0.06)"></div>
<svg class="b" style="left:398px;top:830.0px" width="12" height="12" viewBox="0 0 12 12"><path d="M1.2 1.2 L10.8 10.8 M10.8 1.2 L1.2 10.8" stroke="#f0455a" stroke-width="2"/></svg>
<div class="t" style="left:414.35px;top:830.84px;font-size:12px;color:#fff;transform:scaleX(0.9545);">Radera markerade</div>
<div class="b" style="left:524px;top:826px;width:134px;height:20px;background:#28a745;border-radius:4px;box-shadow:inset 0 -1px rgba(0,0,0,0.14),inset 0 1px rgba(0,0,0,0.06)"></div>
<svg class="b" style="left:530px;top:830.0px" width="13" height="13" viewBox="0 0 13 13"><circle cx="5.2" cy="5.2" r="4.2" fill="#8fdcf5" stroke="#2f8fc6" stroke-width="1.4"/><circle cx="4" cy="4" r="1.4" fill="#d8f4fd"/><line x1="8.3" y1="8.3" x2="11.5" y2="11.5" stroke="#8a3f9a" stroke-width="2.6" stroke-linecap="round"/></svg>
<div class="t" style="left:546.28px;top:830.84px;font-size:12px;color:#fff;transform:scaleX(1.0162);">Hitta liknande bilder</div>
<div class="b" style="left:27px;top:860px;width:151px;height:20px;background:#28a745;border-radius:4px;box-shadow:inset 0 -1px rgba(0,0,0,0.14),inset 0 1px rgba(0,0,0,0.06)"></div>
<svg class="b" style="left:33px;top:864.0px" width="13" height="13" viewBox="0 0 13 13"><g transform="rotate(45 6.5 6.5)"><rect x="4.3" y="-0.5" width="4.4" height="14" rx="2.2" fill="#c9e6f5"/><rect x="4.3" y="5.5" width="4.4" height="8" rx="2.2" fill="#a8e05a"/><rect x="3.6" y="-0.8" width="5.8" height="1.8" fill="#b9d9ea"/></g></svg>
<div class="t" style="left:50.30px;top:864.84px;font-size:12px;color:#fff;transform:scaleX(0.9888);">Testa semantiskt minne</div>
<div class="b" style="left:192px;top:860px;width:124px;height:20px;background:#ffc107;border-radius:4px;box-shadow:inset 0 -1px rgba(0,0,0,0.14),inset 0 1px rgba(0,0,0,0.06)"></div>
<svg class="b" style="left:198px;top:864.0px" width="12" height="12" viewBox="0 0 12 12"><defs><linearGradient id="gw" x1="0" y1="0" x2="0" y2="1"><stop offset="0" stop-color="#ffd84a"/><stop offset="1" stop-color="#ffa860"/></linearGradient></defs><path d="M6 0.5 L11.8 10.5 L0.2 10.5Z" fill="url(#gw)"/><rect x="5.4" y="3.4" width="1.3" height="4.6" fill="#4a4040"/><rect x="5.4" y="8.8" width="1.3" height="1.2" fill="#4a4040"/></svg>
<div class="t" style="left:214.02px;top:864.84px;font-size:12px;color:#111;transform:scaleX(0.9768);">Rensa hela minnet</div>
<div class="b" style="left:330px;top:860px;width:169px;height:20px;background:#dc3545;border-radius:4px;box-shadow:inset 0 -1px rgba(0,0,0,0.14),inset 0 1px rgba(0,0,0,0.06)"></div>
<svg class="b" style="left:336px;top:864.0px" width="12" height="12" viewBox="0 0 12 12"><rect x="0.3" y="0.4" width="11.4" height="1.6" rx="0.5" fill="#dfe2e8"/><path d="M1.2 2 L10.8 2 L9.8 11.6 L2.2 11.6Z" fill="#ffffff" fill-opacity="0.35" stroke="#d5d8de" stroke-width="0.9"/><path d="M2 3.5 L9 10.5 M4.5 3 L10 8.5 M7.5 3 L10.4 5.9 M10 3.5 L3 10.5 M7.5 3 L2 8.5 M4.5 3 L1.6 5.9" stroke="#d9dce2" stroke-width="0.7"/></svg>
<div class="t" style="left:353.50px;top:864.84px;font-size:12px;color:#fff;transform:scaleX(0.9944);">Ta bort tagg från alla bilder</div>
<div class="b" style="left:513px;top:860px;width:166px;height:20px;background:#17a2b8;border-radius:4px;box-shadow:inset 0 -1px rgba(0,0,0,0.14),inset 0 1px rgba(0,0,0,0.06)"></div>
<svg class="b" style="left:518.5px;top:864.0px" width="12" height="12" viewBox="0 0 12 12"><path d="M6 0.5 V11.5 M0.5 6 H11.5" stroke="#8b63d8" stroke-width="2.2"/></svg>
<div class="t" style="left:535.40px;top:864.84px;font-size:12px;color:#fff;transform:scaleX(0.9964);">Lägg till tagg på alla bilder</div>
<div class="b" style="left:1342px;top:328px;width:536px;height:225px;border:1px solid #646464;border-radius:4px;box-sizing:border-box"></div>
<div class="b" style="left:1348px;top:326px;width:109px;height:5px;background:#f3f3f3"></div>
<div class="t" style="left:1349.29px;top:321.84px;font-size:12px;color:#111;transform:scaleX(1.0107);">Bildförhandsvisning</div>
<div class="b" style="left:1352px;top:345px;width:517px;height:198px;border:2px solid #cfcfcf;border-radius:4px;box-sizing:border-box;background:#f3f3f3"></div>
<svg class="b" style="left:1410px;top:346px" width="400" height="196" viewBox="0 0 400 196">
<defs>
<filter id="bl1" x="-20%" y="-20%" width="140%" height="140%"><feGaussianBlur stdDeviation="0.7"/></filter>
<filter id="bl2" x="-20%" y="-20%" width="140%" height="140%"><feGaussianBlur stdDeviation="2.6"/></filter>
<filter id="tex" x="0" y="0" width="100%" height="100%"><feTurbulence type="fractalNoise" baseFrequency="0.06" numOctaves="4" seed="7"/><feColorMatrix type="matrix" values="1.3 0 0 0 -0.15  1.3 0 0 0 -0.15  1.3 0 0 0 -0.15  0 0 0 0 1"/></filter>
<filter id="bl4" x="-30%" y="-30%" width="160%" height="160%"><feGaussianBlur stdDeviation="3.5"/></filter>
<filter id="bl6" x="-30%" y="-30%" width="160%" height="160%"><feGaussianBlur stdDeviation="6"/></filter>
<linearGradient id="rain" x1="0" y1="0" x2="0" y2="1"><stop offset="0" stop-color="#545a64" stop-opacity="0.95"/><stop offset="1" stop-color="#6a7078" stop-opacity="0.15"/></linearGradient>
<clipPath id="pc"><rect width="400" height="196"/></clipPath>
</defs>
<g clip-path="url(#pc)">
<rect width="400" height="100" fill="#d6d9de"/>
<g filter="url(#bl6)">
<rect x="0" y="0" width="60" height="25" fill="#c6cad0"/>
<rect x="0" y="30" width="40" height="35" fill="#b2b7be"/>
<ellipse cx="95" cy="45" rx="55" ry="24" fill="#eceef1"/>
<ellipse cx="300" cy="36" rx="75" ry="24" fill="#eef0f2"/>
<ellipse cx="380" cy="22" rx="28" ry="26" fill="#a3a8af"/>
<ellipse cx="230" cy="25" rx="40" ry="15" fill="#c3c7cd"/>
</g>
<g filter="url(#bl2)">
<path d="M112 20 L146 23 L187 25 L200 37 L208 54 L204 67 L196 73 L183 69 L146 67 L144 52 L129 35 L117 27Z" fill="#3f78c2"/>
<path d="M146 54 L200 56 L208 80 L146 82Z" fill="#6f94c4"/>
<path d="M36 40 C50 22 85 18 110 26 C130 30 148 44 147 56 C135 64 110 68 80 68 C55 68 32 58 36 40Z" fill="#f2f3f5"/>
<path d="M79 56 C90 50 115 50 126 58 C120 70 95 73 79 70Z" fill="#9da2aa"/>
<path d="M0 62 C40 60 100 66 135 72 C120 80 40 80 0 79Z" fill="#6e7686"/>
<path d="M146 64 C160 60 185 62 196 68 C190 78 160 80 146 78Z" fill="#d6d9de"/>
<path d="M150 72 C165 70 185 72 194 76 C180 80 160 80 150 78Z" fill="#8a9099"/>
<path d="M190 30 C220 8 300 8 350 18 C375 26 372 48 360 58 C320 62 250 60 200 55 C188 48 186 38 190 30Z" fill="#eaecef"/>
<ellipse cx="300" cy="40" rx="50" ry="18" fill="#f1f2f4"/>

<path d="M196 71 C205 62 250 60 300 61 C340 61 380 62 400 64 L400 84 C340 82 260 80 200 78Z" fill="#4f555e"/>
<path d="M173 82 C200 80 240 82 262 86 C240 90 200 90 173 88Z" fill="#e8eaee"/>
<path d="M0 75 C60 74 120 76 175 80 L175 84 C120 82 60 82 0 82Z" fill="#8592a8"/>
</g>
<rect x="255" y="62" width="145" height="80" fill="url(#rain)" filter="url(#bl4)" opacity="0.85"/>
<path d="M0 79 L100 83 L200 88 L300 93 L400 98 L400 196 L0 196Z" fill="#6a5650"/>
<g filter="url(#bl4)">
<path d="M0 79 L200 88 L400 98 L400 104 L200 95 L0 86Z" fill="#343a4c"/>
<rect x="187" y="92" width="125" height="25" fill="#3c3f4e"/>
<rect x="0" y="84" width="54" height="24" fill="#8e5a4a"/>
<rect x="0" y="108" width="62" height="38" fill="#453836"/>
<rect x="0" y="140" width="90" height="56" fill="#342b29"/>
<rect x="83" y="90" width="115" height="38" fill="#b07262"/>
<rect x="100" y="125" width="150" height="42" fill="#c4b49a"/>
<rect x="240" y="100" width="115" height="50" fill="#666770"/>
<rect x="292" y="117" width="108" height="33" fill="#777078"/>
<rect x="208" y="125" width="94" height="46" fill="#a49282"/>
<rect x="79" y="162" width="96" height="34" fill="#6a5a52"/>
</g>
<g filter="url(#bl2)">
<path d="M95 90 L140 88 L180 92 L190 96 L150 98 L100 96Z" fill="#c4a494"/>
<path d="M0 118 L50 122 L40 128 L0 126Z" fill="#857268"/>
<path d="M20 196 L55 165 L92 127 L105 130 L130 150 L150 196Z" fill="#4a3e3a" opacity="0.9"/>
<path d="M100 110 L198 106 L200 120 L110 124Z" fill="#aa6c5c"/>
<path d="M380 98 L400 100 L400 125 L385 120Z" fill="#3e424e"/>
</g>
<g filter="url(#bl1)">
<path d="M246 196 L260 177 L292 167 L319 154 L333 153 L346 163 L354 167 L385 179 L400 181 L400 196Z" fill="#a6684a"/>
<path d="M344 150 L372 147 L400 148 L400 181 L385 179 L354 167 L346 163Z" fill="#9a8a84"/>
<path d="M174 196 C172 185 176 172 180 166 C176 160 182 152 188 152 C188 146 196 142 201 145 C207 146 208 152 206 156 C211 160 210 168 208 172 C212 176 218 170 222 172 C224 164 230 160 235 164 C240 168 238 176 242 180 C246 186 244 192 244 196Z" fill="#1e2b1f"/>
<path d="M354 196 L365 184 L385 177 L400 178 L400 196Z" fill="#26322a"/>
</g>
<rect width="400" height="196" filter="url(#tex)" opacity="0.22" style="mix-blend-mode:soft-light"/>
<g opacity="0.85" filter="url(#bl1)" fill="none" stroke-width="1.6">
<path d="M312 68 Q 368 88 402 132" stroke="#d94c44"/>
<path d="M311 70 Q 366 90 400 134" stroke="#e8c04a"/>
<path d="M310 72 Q 364 92 398 136" stroke="#6cb45c"/>
<path d="M309 74 Q 362 94 396 138" stroke="#5a78c8"/>
</g>
</g>
</svg>
<div class="b" style="left:1342px;top:569px;width:536px;height:150px;border:1px solid #646464;border-radius:4px;box-sizing:border-box"></div>
<div class="b" style="left:1348px;top:567px;width:41px;height:5px;background:#f3f3f3"></div>
<div class="t" style="left:1350.30px;top:563.84px;font-size:12px;color:#111;transform:scaleX(0.9649);">Taggar</div>
<div class="t" style="left:1350.27px;top:588.84px;font-size:12px;color:#666;transform:scaleX(0.9761);">Redigera taggar (kommaseparerade):</div>
<div class="b" style="left:1353px;top:610px;width:514px;height:20px;background:#fff;border-radius:4px"></div>
<div class="b" style="left:1355px;top:629px;width:510px;height:1px;background:#707070"></div>
<div class="b" style="left:1353px;top:610px;width:512px;height:20px;overflow:hidden">
<div class="t" style="left:4.50px;top:3.84px;font-size:12px;color:#111;transform:scaleX(1.0113);">atmosfäriskt fenomen, båge på himlen, fridfullt, färgrikt, harmoni, himmel, himmelsfenomen, jord</div>
</div>
<div class="t" style="left:1351.25px;top:638.34px;font-size:12px;color:#666;transform:scaleX(0.9874);">Verifierade taggar (kommaseparerade, högre prioritet):</div>
<div class="b" style="left:1353px;top:660px;width:514px;height:20px;background:#eef6fd;border-radius:4px"></div>
<div class="b" style="left:1355px;top:679px;width:510px;height:1px;background:#707070"></div>
<div class="t" style="left:1357.20px;top:663.84px;font-size:12px;color:#8a8a8a;transform:scaleX(0.9707);">verifierad_tagg1, verifierad_tagg2...</div>
<div class="b" style="left:1354px;top:689px;width:122px;height:19px;background:#fdfdfd;border:1px solid #e6e6e6;border-bottom-color:#cdcdcd;border-radius:4px;box-sizing:border-box"></div>
<svg class="b" style="left:1358.5px;top:692px" width="13" height="13" viewBox="0 0 13 13"><circle cx="6.5" cy="6.5" r="5.3" fill="none" stroke="#ef3d5a" stroke-width="1.6"/><line x1="2.8" y1="2.8" x2="10.2" y2="10.2" stroke="#ef3d5a" stroke-width="1.6"/></svg>
<div class="t" style="left:1375.26px;top:692.54px;font-size:12px;color:#111;transform:scaleX(0.9923);">Blockera vald tagg</div>
<div class="b" style="left:1342px;top:735px;width:536px;height:82px;border:1px solid #646464;border-radius:4px;box-sizing:border-box"></div>
<div class="b" style="left:1348px;top:733px;width:65px;height:5px;background:#f3f3f3"></div>
<div class="t" style="left:1349.19px;top:728.84px;font-size:12px;color:#111;transform:scaleX(1.0067);">Beskrivning</div>
<div class="b" style="left:1353px;top:754px;width:514px;height:52px;background:#fff;border-radius:4px 4px 0 0"></div>
<div class="t" style="left:1355.60px;top:760.14px;font-size:12px;color:#111;">{</div>
<div class="t" style="left:1362.60px;top:775.44px;font-size:12px;color:#111;transform:scaleX(0.9971);">"metadata": {</div>
<div class="t" style="left:1368.90px;top:791.44px;font-size:12px;color:#111;transform:scaleX(1.0061);">"title": "Luftvy av regnbåge över kanjon",</div>
<div class="b" style="left:1861px;top:766px;width:2px;height:16px;background:#b9b9b9;border-radius:1px"></div>
<div class="b" style="left:1344px;top:827px;width:260px;height:19px;background:#fdfdfd;border:1px solid #e6e6e6;border-bottom-color:#cdcdcd;border-radius:4px;box-sizing:border-box"></div>
<svg class="b" style="left:1425.2px;top:830.5px" width="12" height="12" viewBox="0 0 12 12"><rect x="0" y="0" width="12" height="12" rx="1" fill="#5b3f8c"/><rect x="2.5" y="0.6" width="7" height="4" fill="#e8e2f2"/><rect x="2" y="6.5" width="8" height="5" fill="#c9b8e6"/><rect x="7" y="1.2" width="1.5" height="2.6" fill="#5b3f8c"/></svg>
<div class="t" style="left:1441.32px;top:831.34px;font-size:12px;color:#111;transform:scaleX(0.9753);">Spara ändringar</div>
<div class="b" style="left:1615px;top:826px;width:262px;height:20px;background:#dc3545;border-radius:4px;box-shadow:inset 0 -1px rgba(0,0,0,0.14),inset 0 1px rgba(0,0,0,0.06)"></div>
<svg class="b" style="left:1709px;top:830px" width="12" height="12" viewBox="0 0 12 12"><rect x="0.3" y="0.4" width="11.4" height="1.6" rx="0.5" fill="#dfe2e8"/><path d="M1.2 2 L10.8 2 L9.8 11.6 L2.2 11.6Z" fill="#ffffff" fill-opacity="0.35" stroke="#d5d8de" stroke-width="0.9"/><path d="M2 3.5 L9 10.5 M4.5 3 L10 8.5 M7.5 3 L10.4 5.9 M10 3.5 L3 10.5 M7.5 3 L2 8.5 M4.5 3 L1.6 5.9" stroke="#d9dce2" stroke-width="0.7"/></svg>
<div class="t" style="left:1725.28px;top:831.34px;font-size:12px;color:#fff;transform:scaleX(0.9742);">Radera bild</div>
<div class="b" style="left:26px;top:901px;width:1852px;height:110px;border:1px solid #646464;border-bottom:none;border-radius:4px 4px 0 0;box-sizing:border-box"></div>
<div class="b" style="left:33px;top:899px;width:153px;height:5px;background:#f3f3f3"></div>
<svg class="b" style="left:36px;top:894px" width="12" height="12" viewBox="0 0 12 12"><g fill="#b9a7d8"><circle cx="6" cy="6" r="3.8"/><g stroke="#b9a7d8" stroke-width="2"><line x1="6" y1="0.2" x2="6" y2="11.8"/><line x1="0.2" y1="6" x2="11.8" y2="6"/><line x1="1.9" y1="1.9" x2="10.1" y2="10.1"/><line x1="10.1" y1="1.9" x2="1.9" y2="10.1"/></g></g><circle cx="6" cy="6" r="1.8" fill="#f3f3f3"/></svg>
<div class="t" style="left:53.20px;top:895.84px;font-size:12px;color:#111;transform:scaleX(0.9924);">Avancerade inställningar</div>
<div class="t" style="left:35.60px;top:924.54px;font-size:12px;color:#111;transform:scaleX(0.9927);">Top K (antal liknande bilder):</div>
<div class="b" style="left:230.5px;top:920px;width:1636.5px;height:21.5px;background:#fff;border-radius:4px"></div>
<div class="b" style="left:232.5px;top:940.5px;width:1632.5px;height:1px;background:#707070"></div>
<div class="t" style="left:235.60px;top:924.54px;font-size:12px;color:#111;">2</div>
<svg class="b" style="left:1839.3px;top:927.5px" width="10" height="6" viewBox="0 0 10 6"><path d="M0.8 5.2 L5.0 0.8 L9.2 5.2" fill="none" stroke="#333" stroke-width="1.1"/></svg>
<svg class="b" style="left:1855.5px;top:928px" width="10" height="6" viewBox="0 0 10 6"><path d="M0.8 0.8 L5.0 5.2 L9.2 0.8" fill="none" stroke="#333" stroke-width="1.1"/></svg>
<div class="t" style="left:34.62px;top:954.34px;font-size:12px;color:#111;transform:scaleX(0.9840);">Likhetströskel:</div>
<div class="b" style="left:230.5px;top:950px;width:1636.5px;height:21.5px;background:#fff;border-radius:4px"></div>
<div class="b" style="left:232.5px;top:970.5px;width:1632.5px;height:1px;background:#707070"></div>
<div class="t" style="left:235.60px;top:954.34px;font-size:12px;color:#111;">0,00</div>
<svg class="b" style="left:1839.3px;top:957.5px" width="10" height="6" viewBox="0 0 10 6"><path d="M0.8 5.2 L5.0 0.8 L9.2 5.2" fill="none" stroke="#333" stroke-width="1.1"/></svg>
<svg class="b" style="left:1855.5px;top:958px" width="10" height="6" viewBox="0 0 10 6"><path d="M0.8 0.8 L5.0 5.2 L9.2 0.8" fill="none" stroke="#333" stroke-width="1.1"/></svg>
<div class="t" style="left:34.64px;top:984.54px;font-size:12px;color:#111;transform:scaleX(0.9582);">Baseline max rader (prestanda):</div>
<div class="b" style="left:230.5px;top:980px;width:1636.5px;height:21.5px;background:#fff;border-radius:4px"></div>
<div class="b" style="left:232.5px;top:1000.5px;width:1632.5px;height:1px;background:#707070"></div>
<div class="t" style="left:234.60px;top:984.54px;font-size:12px;color:#111;">50000</div>
<svg class="b" style="left:1839.3px;top:987.5px" width="10" height="6" viewBox="0 0 10 6"><path d="M0.8 5.2 L5.0 0.8 L9.2 5.2" fill="none" stroke="#333" stroke-width="1.1"/></svg>
<svg class="b" style="left:1855.5px;top:988px" width="10" height="6" viewBox="0 0 10 6"><path d="M0.8 0.8 L5.0 5.2 L9.2 0.8" fill="none" stroke="#333" stroke-width="1.1"/></svg>
<div class="b" style="left:15px;top:1010px;width:1874px;height:4px;background:#fff"></div>
<div class="b" style="left:1744px;top:1023px;width:75px;height:20px;background:#fdfdfd;border:1px solid #e6e6e6;border-bottom-color:#cdcdcd;border-radius:4px;box-sizing:border-box"></div>
<div class="t" style="left:1764.30px;top:1027.84px;font-size:12px;color:#111;transform:scaleX(1.0118);">Avbryt</div>
<div class="b" style="left:1829px;top:1023px;width:75px;height:20px;background:#fdfdfd;border:1px solid #1a6fc0;border-bottom:2px solid #0f5aa6;border-radius:4px;box-sizing:border-box"></div>
<div class="t" style="left:1851.28px;top:1027.84px;font-size:12px;color:#111;transform:scaleX(0.9161);">Spara</div>
<div class="b" style="left:0px;top:1059px;width:1920px;height:21px;background:#fff"></div>
<div class="b" style="left:0px;top:1058px;width:1920px;height:1px;background:#ebebeb"></div>
<div class="t" style="left:9.43px;top:1064.84px;font-size:12px;color:#111;transform:scaleX(0.9741);">Redo</div>
</body></html>
